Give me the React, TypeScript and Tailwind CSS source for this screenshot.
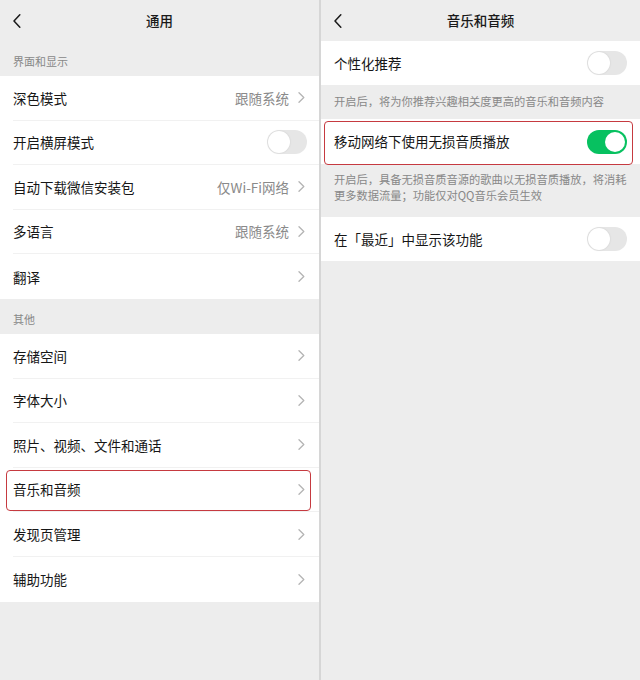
import React from "react";

const FONT = { fontFamily: '"Noto Sans CJK SC", "Noto Sans", sans-serif' };

function Chevron() {
  return (
    <svg width="7" height="11" viewBox="0 0 7 11" className="shrink-0">
      <path d="M1 0.8 L5.8 5.5 L1 10.2" fill="none" stroke="#b4b4b4" strokeWidth="1.3" strokeLinecap="round" strokeLinejoin="round" />
    </svg>
  );
}

function Back() {
  return (
    <svg width="8" height="14" viewBox="0 0 8 14" className="shrink-0">
      <path d="M6.8 0.8 L1 7 L6.8 13.2" fill="none" stroke="#1a1a1a" strokeWidth="1.5" strokeLinecap="round" strokeLinejoin="round" />
    </svg>
  );
}

function Toggle({ on }: { on?: boolean }) {
  if (on) {
    return (
      <div className="w-[40px] h-[24px] rounded-full bg-[#07c160] flex items-center justify-end pr-[2px] shrink-0">
        <div className="w-[20px] h-[20px] rounded-full bg-white" />
      </div>
    );
  }
  return (
    <div className="w-[40px] h-[24px] rounded-full bg-[#e6e6e6] flex items-center pl-[1px] shrink-0">
      <div className="w-[22px] h-[22px] rounded-full bg-white shadow-[0_0_2px_rgba(0,0,0,0.12)]" />
    </div>
  );
}

function Header({ title }: { title: string }) {
  return (
    <div className="relative h-[41px] flex items-center justify-center bg-[#ededed]">
      <div className="absolute left-[13px] top-[14px]">
        <Back />
      </div>
      <span className="text-[13.5px] font-medium text-[#1a1a1a]">{title}</span>
    </div>
  );
}

type RowProps = {
  label: string;
  value?: string;
  toggle?: boolean;
  last?: boolean;
  highlight?: boolean;
};

function Row({ label, value, toggle, last, highlight }: RowProps) {
  return (
    <div className="relative h-[44.6px] bg-white pl-[13px] flex">
      <div className={`flex-1 flex items-center pr-[12px] ${last ? "" : "border-b border-[#f1f1f1]"}`}>
        <span className="flex-1 text-[13.5px] text-[#161616]">{label}</span>
        {toggle ? (
          <Toggle />
        ) : (
          <div className="flex items-center gap-[9px] pr-[2px]">
            {value && <span className="text-[13.5px] text-[#8a8a8a]">{value}</span>}
            <Chevron />
          </div>
        )}
      </div>
      {highlight && (
        <div className="absolute left-[6px] right-[8px] top-[2.5px] bottom-[1px] border-[1.5px] border-[#c63a40] rounded-[4px]" />
      )}
    </div>
  );
}

function SectionLabel({ text }: { text: string }) {
  return (
    <div className="h-[35px] pl-[13px] pt-[12px] text-[11px] leading-[16px] text-[#888888]">{text}</div>
  );
}

function LeftPanel() {
  return (
    <div className="w-[319px] shrink-0 h-full bg-[#ededed] flex flex-col">
      <Header title="通用" />
      <SectionLabel text="界面和显示" />
      <Row label="深色模式" value="跟随系统" />
      <Row label="开启横屏模式" toggle />
      <Row label="自动下载微信安装包" value="仅Wi-Fi网络" />
      <Row label="多语言" value="跟随系统" />
      <Row label="翻译" last />
      <SectionLabel text="其他" />
      <Row label="存储空间" />
      <Row label="字体大小" />
      <Row label="照片、视频、文件和通话" />
      <Row label="音乐和音频" highlight />
      <Row label="发现页管理" />
      <Row label="辅助功能" last />
    </div>
  );
}

function RightPanel() {
  return (
    <div className="w-[319px] shrink-0 min-w-0 h-full bg-[#ededed] flex flex-col overflow-hidden">
      <Header title="音乐和音频" />
      <div className="h-[44px] bg-white flex items-center px-[13px]">
        <span className="flex-1 text-[13.5px] text-[#161616]">个性化推荐</span>
        <Toggle />
      </div>
      <div className="h-[34px] px-[13px] pt-[8px] text-[11.25px] leading-[16px] text-[#888888] whitespace-nowrap">
        开启后，将为你推荐兴趣相关度更高的音乐和音频内容
      </div>
      <div className="relative h-[45px] bg-white flex items-center px-[13px]">
        <span className="flex-1 text-[13.5px] text-[#161616]">移动网络下使用无损音质播放</span>
        <Toggle on />
        <div className="absolute left-[3px] right-[7px] top-[2px] bottom-[-1px] border-[1.5px] border-[#c63a40] rounded-[4px]" />
      </div>
      <div className="h-[53px] px-[13px] pt-[8px] text-[11.25px] leading-[15.5px] text-[#888888] whitespace-nowrap">
        开启后，具备无损音质音源的歌曲以无损音质播放，将消耗
        <br />
        更多数据流量；功能仅对QQ音乐会员生效
      </div>
      <div className="h-[44px] bg-white flex items-center px-[13px]">
        <span className="flex-1 text-[13.5px] text-[#161616]">在「最近」中显示该功能</span>
        <Toggle />
      </div>
    </div>
  );
}

export default function App() {
  return (
    <div className="w-[640px] h-[680px] flex bg-[#ededed] overflow-hidden" style={FONT}>
      <LeftPanel />
      <div className="w-[2px] shrink-0 h-full bg-[#d6d6d6]" />
      <RightPanel />
    </div>
  );
}
